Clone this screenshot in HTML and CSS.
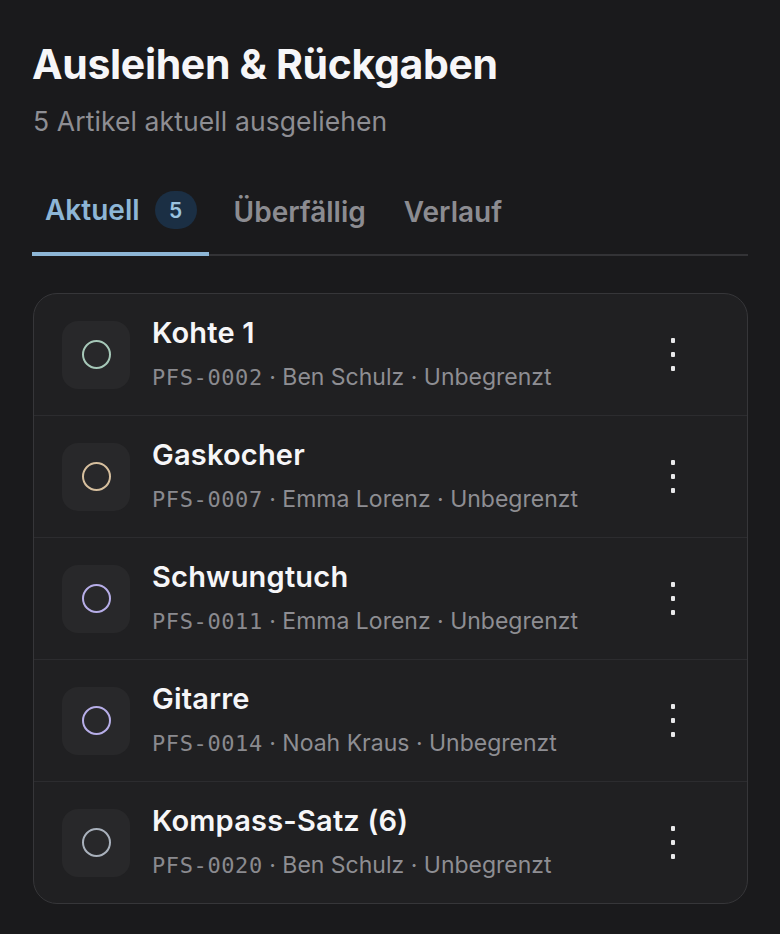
FILE: index.html
```html
<!DOCTYPE html>
<html lang="de">
<head>
<meta charset="utf-8">
<link rel="stylesheet" href="styles.css">
</head>
<body>
<main class="page">
  <h1 class="title">Ausleihen &amp; Rückgaben</h1>
  <p class="subtitle">5 Artikel aktuell ausgeliehen</p>

  <nav class="tabs">
    <div class="tab active">Aktuell <span class="badge">5</span></div>
    <div class="tab">Überfällig</div>
    <div class="tab">Verlauf</div>
  </nav>

  <section class="card">
    <div class="row">
      <div class="icon"><span class="ring green"></span></div>
      <div class="info">
        <div class="name">Kohte 1</div>
        <div class="meta"><span class="code">PFS-0002</span> · Ben Schulz · Unbegrenzt</div>
      </div>
      <div class="kebab"><i></i><i></i><i></i></div>
    </div>
    <div class="row">
      <div class="icon"><span class="ring tan"></span></div>
      <div class="info">
        <div class="name">Gaskocher</div>
        <div class="meta"><span class="code">PFS-0007</span> · Emma Lorenz · Unbegrenzt</div>
      </div>
      <div class="kebab"><i></i><i></i><i></i></div>
    </div>
    <div class="row">
      <div class="icon"><span class="ring violet"></span></div>
      <div class="info">
        <div class="name">Schwungtuch</div>
        <div class="meta"><span class="code">PFS-0011</span> · Emma Lorenz · Unbegrenzt</div>
      </div>
      <div class="kebab"><i></i><i></i><i></i></div>
    </div>
    <div class="row">
      <div class="icon"><span class="ring violet"></span></div>
      <div class="info">
        <div class="name">Gitarre</div>
        <div class="meta"><span class="code">PFS-0014</span> · Noah Kraus · Unbegrenzt</div>
      </div>
      <div class="kebab"><i></i><i></i><i></i></div>
    </div>
    <div class="row">
      <div class="icon"><span class="ring grey"></span></div>
      <div class="info">
        <div class="name">Kompass-Satz (6)</div>
        <div class="meta"><span class="code">PFS-0020</span> · Ben Schulz · Unbegrenzt</div>
      </div>
      <div class="kebab"><i></i><i></i><i></i></div>
    </div>
  </section>
</main>
</body>
</html>
```

FILE: styles.css
```css
html, body {
  margin: 0;
  padding: 0;
  background: #1a1a1c;
}
body {
  font-family: Inter, "Noto Sans", sans-serif;
  color: #f4f4f6;
}
.page {
  padding: 40px 32px 0 32px;
}
.title {
  margin: 0;
  font-size: 41px;
  font-weight: 700;
  line-height: 48px;
  letter-spacing: -0.35px;
  color: #f6f6f8;
}
.subtitle {
  margin: 17px 0 0 1px;
  font-size: 26.5px;
  line-height: 32px;
  letter-spacing: 0.1px;
  color: #8e8e93;
}
.tabs {
  margin-top: 35px;
  display: flex;
  gap: 12px;
  border-bottom: 2px solid #333336;
}
.tab {
  display: flex;
  align-items: center;
  gap: 15px;
  height: 84px;
  padding: 0 13px 4px 13px;
  font-size: 28px;
  font-weight: 600;
  color: #8c8c91;
  margin-bottom: -2px;
  box-sizing: border-box;
}
.tab.active {
  color: #8db6d6;
  border-bottom: 4px solid #8db6d6;
  padding-right: 12px;
}
.badge {
  display: inline-flex;
  align-items: center;
  justify-content: center;
  width: 42px;
  height: 38px;
  border-radius: 19px;
  background: #1b2f44;
  color: #9cc4e0;
  font-size: 21px;
  font-weight: 600;
}
.card {
  margin-top: 37px;
  margin-left: 1px;
  border: 1px solid #363639;
  border-radius: 24px;
  background: #202022;
  overflow: hidden;
}
.row {
  display: flex;
  align-items: center;
  height: 121px;
  padding: 0 28px;
  border-bottom: 1px solid #2c2c2f;
}
.row:last-child {
  border-bottom: none;
}
.icon {
  width: 68px;
  height: 68px;
  border-radius: 16px;
  background: #28282a;
  display: flex;
  align-items: center;
  justify-content: center;
  flex: none;
}
.ring {
  width: 25px;
  height: 25px;
  border-radius: 50%;
  border: 2.5px solid #a8c9b9;
}
.ring.green { border-color: #a6c8b8; }
.ring.tan { border-color: #d6bf9e; }
.ring.violet { border-color: #b7aee8; }
.ring.grey { border-color: #a9b1bc; }
.info {
  flex: 1;
  margin-left: 22px;
  display: flex;
  flex-direction: column;
  gap: 12px;
  margin-top: -1px;
}
.name {
  font-size: 29px;
  font-weight: 600;
  line-height: 34px;
  letter-spacing: 0.2px;
  color: #f6f6f8;
}
.meta {
  font-size: 23px;
  line-height: 30px;
  color: #8e8e93;
  white-space: nowrap;
}
.code {
  font-family: "DejaVu Sans Mono", "Liberation Mono", monospace;
  font-size: 22px;
  letter-spacing: 0.6px;
  color: #8a8a8f;
}
.kebab {
  width: 8px;
  display: flex;
  flex-direction: column;
  align-items: center;
  gap: 9px;
  margin-right: 42px;
}
.kebab i {
  display: block;
  width: 4px;
  height: 5px;
  background: #e8e8ea;
  border-radius: 1px;
}
```
